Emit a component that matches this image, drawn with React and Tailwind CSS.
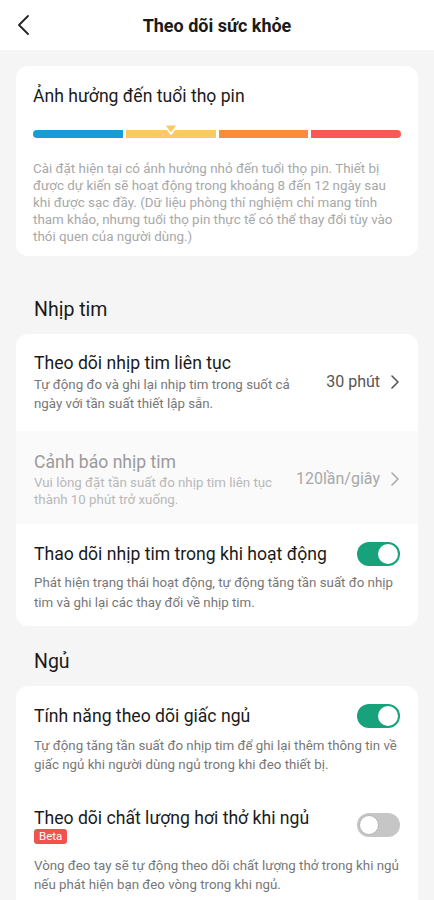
import React from 'react';

function Chevron({ color = '#666' }) {
  return (
    <svg width="10" height="16" viewBox="0 0 10 16" fill="none">
      <path d="M2 2l6 6-6 6" stroke={color} strokeWidth="1.6" strokeLinecap="round" strokeLinejoin="round" />
    </svg>
  );
}

function Toggle({ on }) {
  return on ? (
    <div className="w-[43px] h-[24px] rounded-full bg-[#17a27b] flex items-center justify-end px-[2px] shrink-0">
      <div className="w-[20px] h-[20px] rounded-full bg-white" />
    </div>
  ) : (
    <div className="w-[43px] h-[24px] rounded-full bg-[#c6c6c6] flex items-center justify-start px-[2px] shrink-0">
      <div className="w-[20px] h-[20px] rounded-full bg-white border border-[#b5b5b5]" />
    </div>
  );
}

function SectionTitle({ children, className }) {
  return <div className={`px-[18px] text-[19.5px] leading-[26px] text-[#1a1a1a] ${className}`}>{children}</div>;
}

export default function App() {
  return (
    <div className="min-h-[900px] bg-[#f5f5f5]" style={{ fontFamily: 'Roboto, "Noto Sans", sans-serif' }}>
      {/* Header */}
      <div className="h-[50px] bg-white flex items-center relative">
        <div className="absolute left-[17px] top-[14px]">
          <svg width="14" height="22" viewBox="0 0 14 22" fill="none">
            <path d="M11 2L2 11l9 9" stroke="#222" strokeWidth="1.8" strokeLinecap="round" strokeLinejoin="round" />
          </svg>
        </div>
        <div className="w-full text-center text-[18px] font-bold text-[#1a1a1a]">Theo dõi sức khỏe</div>
      </div>

      <div className="px-4 pt-4">
        {/* Battery impact card */}
        <div className="bg-white rounded-xl px-[17px] pt-[18px] pb-[11px]">
          <div className="text-[17.6px] leading-[24px] text-[#1a1a1a]">Ảnh hưởng đến tuổi thọ pin</div>
          <div className="flex gap-[3px] mt-[22px]">
            <div className="flex-1 h-[8px] rounded-l-full bg-[#1a9bd7]" />
            <div className="flex-1 h-[8px] bg-[#fdc965] relative">
              <svg className="absolute left-1/2 -translate-x-1/2 -top-[7px]" width="18" height="14" viewBox="0 0 18 14">
                <path d="M2 1.5h14L9 11z" fill="#fdc965" stroke="white" strokeWidth="1.8" strokeLinejoin="round" />
              </svg>
            </div>
            <div className="flex-1 h-[8px] bg-[#fa8c3d]" />
            <div className="flex-1 h-[8px] rounded-r-full bg-[#f65a50]" />
          </div>
          <div className="mt-[22px] pr-[4px] text-[13.4px] leading-[17px] text-[#a8a8a8]">
            Cài đặt hiện tại có ảnh hưởng nhỏ đến tuổi thọ pin. Thiết bị được dự kiến sẽ hoạt động trong khoảng 8 đến 12 ngày sau khi được sạc đầy. (Dữ liệu phòng thí nghiệm chỉ mang tính tham khảo, nhưng tuổi thọ pin thực tế có thể thay đổi tùy vào thói quen của người dùng.)
          </div>
        </div>

        <SectionTitle className="pt-[41px] pb-[11px]">Nhịp tim</SectionTitle>

        {/* Heart rate card */}
        <div className="bg-white rounded-xl overflow-hidden">
          <div className="flex items-center px-[18px] pt-[17px] pb-[18px]">
            <div className="flex-1">
              <div className="text-[17.6px] leading-[24px] text-[#1a1a1a]">Theo dõi nhịp tim liên tục</div>
              <div className="text-[13.3px] leading-[19px] text-[#777] pr-6">
                Tự động đo và ghi lại nhịp tim trong suốt cả ngày với tần suất thiết lập sẵn.
              </div>
            </div>
            <div className="flex items-center gap-[10px] shrink-0">
              <span className="text-[16px] text-[#555]">30 phút</span>
              <Chevron color="#555" />
            </div>
          </div>
          <div className="flex items-center px-[18px] pt-[19px] pb-[16px] bg-[#fafafa]">
            <div className="flex-1">
              <div className="text-[17.6px] leading-[24px] text-[#9a9a9a]">Cảnh báo nhịp tim</div>
              <div className="text-[13.3px] leading-[17px] text-[#b8b8b8]">
                Vui lòng đặt tần suất đo nhịp tim liên tục thành 10 phút trở xuống.
              </div>
            </div>
            <div className="flex items-center gap-[10px] shrink-0 pl-[12px]">
              <span className="text-[16px] text-[#a8a8a8]">120lần/giây</span>
              <Chevron color="#aaa" />
            </div>
          </div>
          <div className="px-[18px] pt-[18px] pb-[13px]">
            <div className="flex items-center">
              <div className="flex-1 text-[17.6px] leading-[24px] text-[#1a1a1a]">Thao dõi nhịp tim trong khi hoạt động</div>
              <Toggle on />
            </div>
            <div className="mt-[7px] text-[13.3px] leading-[20px] text-[#777]">
              Phát hiện trạng thái hoạt động, tự động tăng tần suất đo nhịp tim và ghi lại các thay đổi về nhịp tim.
            </div>
          </div>
        </div>

        <SectionTitle className="pt-[23px] pb-[11px]">Ngủ</SectionTitle>

        {/* Sleep card */}
        <div className="bg-white rounded-t-xl pb-6">
          <div className="px-[18px] pt-[18px]">
            <div className="flex items-center">
              <div className="flex-1 text-[17.6px] leading-[24px] text-[#1a1a1a]">Tính năng theo dõi giấc ngủ</div>
              <Toggle on />
            </div>
            <div className="mt-[8px] text-[13.3px] leading-[19px] text-[#777]">
              Tự động tăng tần suất đo nhịp tim để ghi lại thêm thông tin về giấc ngủ khi người dùng ngủ trong khi đeo thiết bị.
            </div>
          </div>
          <div className="px-[18px] pt-[32px]">
            <div className="flex items-start">
              <div className="flex-1">
                <div className="text-[17.6px] leading-[24px] text-[#1a1a1a]">Theo dõi chất lượng hơi thở khi ngủ</div>
                <div className="w-fit mt-[-1px] px-[5px] rounded-[3px] bg-[#ef5350] text-white text-[11.5px] leading-[15px]">Beta</div>
              </div>
              <div className="pt-[7px]">
                <Toggle on={false} />
              </div>
            </div>
            <div className="mt-[12px] text-[13.3px] leading-[19px] text-[#777]">
              Vòng đeo tay sẽ tự động theo dõi chất lượng thở trong khi ngủ nếu phát hiện bạn đeo vòng trong khi ngủ.
            </div>
          </div>
        </div>
      </div>
    </div>
  );
}
